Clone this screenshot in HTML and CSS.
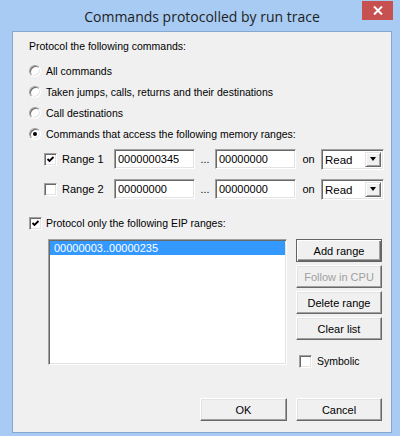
FILE: index.html
```html
<!DOCTYPE html>
<html lang="en">
<head>
  <meta charset="UTF-8">
  <meta name="viewport" content="width=device-width, initial-scale=1.0">
  <title>Commands protocolled by run trace</title>
  <link rel="stylesheet" href="styles.css">
</head>
<body>
  <div class="window">
    <div class="titlebar">
      <span class="title">Commands protocolled by run trace</span>
      <span class="close">
        <svg width="10" height="9" viewBox="0 0 10 9"><path d="M1 0.5 L9 8.5 M9 0.5 L1 8.5" stroke="#fff" stroke-width="2"/></svg>
      </span>
    </div>

    <div class="client">
      <p class="caption">Protocol the following commands:</p>

      <div class="options">
        <div class="opt"><span class="radio"></span>All commands</div>
        <div class="opt"><span class="radio"></span>Taken jumps, calls, returns and their destinations</div>
        <div class="opt"><span class="radio"></span>Call destinations</div>
        <div class="opt"><span class="radio checked"></span>Commands that access the following memory ranges:</div>
      </div>

      <div class="ranges">
        <div class="range-row">
          <span class="check checked"></span>
          <span class="range-label">Range 1</span>
          <span class="edit">0000000345</span>
          <span class="dots">...</span>
          <span class="edit">00000000</span>
          <span class="on">on</span>
          <span class="combo"><span class="combo-text">Read</span><span class="combo-btn"></span></span>
        </div>
        <div class="range-row">
          <span class="check"></span>
          <span class="range-label">Range 2</span>
          <span class="edit">00000000</span>
          <span class="dots">...</span>
          <span class="edit">00000000</span>
          <span class="on">on</span>
          <span class="combo"><span class="combo-text">Read</span><span class="combo-btn"></span></span>
        </div>
      </div>

      <div class="eip"><span class="check checked"></span>Protocol only the following EIP ranges:</div>

      <div class="eip-body">
        <div class="listbox">
          <div class="list-item selected">00000003..00000235</div>
        </div>
        <div class="side">
          <button class="btn default">Add range</button>
          <button class="btn" disabled>Follow in CPU</button>
          <button class="btn">Delete range</button>
          <button class="btn">Clear list</button>
          <div class="symbolic"><span class="check"></span>Symbolic</div>
        </div>
      </div>

      <div class="footer">
        <button class="btn ok">OK</button>
        <button class="btn">Cancel</button>
      </div>
    </div>
  </div>
</body>
</html>
```

FILE: styles.css
```css
body {
  margin: 0;
  font-family: "Liberation Sans", Arial, sans-serif;
  font-size: 10.5px;
  color: #000;
}
.window {
  width: 400px;
  height: 436px;
  background-color: #a7cbf2;
  display: flex;
  flex-direction: column;
}
.titlebar {
  position: relative;
  height: 31px;
  display: flex;
  align-items: center;
  justify-content: center;
}
.title {
  font-family: "Open Sans", "Noto Sans", sans-serif;
  font-size: 14px;
  color: #1e1e1e;
  margin-left: 4px;
  margin-top: 1px;
}
.close {
  position: absolute;
  top: 1px;
  right: 7px;
  width: 31px;
  height: 19px;
  background-color: #c75050;
  display: flex;
  align-items: center;
  justify-content: center;
}
.client {
  margin: 0 8px 3px 12px;
  height: 402px;
  box-sizing: border-box;
  border: 1px solid #86a8cf;
  background-color: #f0f0f0;
  padding-top: 7px;
}
.caption {
  margin: 0 0 0 16px;
  line-height: 14px;
}
.options {
  margin-top: 7px;
}
.opt {
  height: 21px;
  display: flex;
  align-items: center;
  padding-left: 16px;
}
.radio {
  width: 10px;
  height: 10px;
  border-radius: 50%;
  background-color: #fff;
  border: 1px solid;
  border-color: #a0a0a0 #fff #fff #a0a0a0;
  box-shadow: inset 1px 1px 0 #696969, inset -1px -1px 0 #e3e3e3;
  margin-right: 5px;
  display: flex;
  align-items: center;
  justify-content: center;
}
.radio.checked::after {
  content: "";
  width: 4px;
  height: 4px;
  border-radius: 50%;
  background-color: #000;
}
.check {
  width: 11px;
  height: 11px;
  background-color: #fff;
  border: 1px solid;
  border-color: #a0a0a0 #fff #fff #a0a0a0;
  box-shadow: inset 1px 1px 0 #696969, inset -1px -1px 0 #e3e3e3;
  flex: none;
}
.check.checked {
  background-image: url("data:image/svg+xml,%3Csvg xmlns='http://www.w3.org/2000/svg' width='11' height='11'%3E%3Cpath d='M2.5 5 L4.5 7 L8.5 3' stroke='%23000' stroke-width='1.8' fill='none'/%3E%3C/svg%3E");
}
.ranges {
  margin-top: 5px;
  display: flex;
  flex-direction: column;
  gap: 10px;
}
.range-row {
  display: flex;
  align-items: center;
  height: 20px;
  padding-left: 31px;
}
.range-label {
  width: 52px;
  margin-left: 5px;
  font-size: 11px;
}
.edit {
  width: 81px;
  height: 20px;
  box-sizing: border-box;
  background-color: #fff;
  border: 1px solid;
  border-color: #a0a0a0 #fff #fff #a0a0a0;
  box-shadow: inset 1px 1px 0 #696969, inset -1px -1px 0 #e3e3e3;
  padding: 3px 0 0 3px;
  font-size: 11px;
  line-height: 13px;
}
.dots {
  width: 20px;
  text-align: center;
}
.on {
  width: 25px;
  text-align: center;
  font-size: 11px;
}
.combo {
  width: 63px;
  height: 21px;
  box-sizing: border-box;
  background-color: #fff;
  border: 1px solid;
  border-color: #a0a0a0 #fff #fff #a0a0a0;
  box-shadow: inset 1px 1px 0 #696969, inset -1px -1px 0 #e3e3e3;
  display: flex;
  padding: 2px;
}
.combo-text {
  flex: 1;
  padding-left: 1px;
  font-size: 11.5px;
  line-height: 16px;
}
.combo-btn {
  width: 16px;
  box-sizing: border-box;
  background-color: #f0f0f0;
  border: 1px solid;
  border-color: #e3e3e3 #696969 #696969 #e3e3e3;
  box-shadow: inset 1px 1px 0 #fff, inset -1px -1px 0 #a0a0a0;
  display: flex;
  align-items: center;
  justify-content: center;
}
.combo-btn::after {
  content: "";
  border-left: 3.5px solid transparent;
  border-right: 3.5px solid transparent;
  border-top: 4px solid #000;
}
.eip {
  margin-top: 17px;
  height: 14px;
  display: flex;
  align-items: center;
  gap: 4px;
  padding-left: 16px;
}
.eip-body {
  margin-top: 9px;
  display: flex;
  align-items: flex-start;
  gap: 9px;
  padding-left: 35px;
}
.listbox {
  width: 239px;
  height: 126px;
  box-sizing: border-box;
  background-color: #fff;
  border: 1px solid;
  border-color: #a0a0a0 #fff #fff #a0a0a0;
  box-shadow: inset 1px 1px 0 #696969, inset -1px -1px 0 #e3e3e3;
  padding: 1px 1px 0 1px;
}
.list-item {
  height: 14px;
  line-height: 14px;
  padding-left: 4px;
  font-size: 11px;
}
.list-item.selected {
  background-color: #3399ff;
  color: #fff;
}
.side {
  width: 86px;
  display: flex;
  flex-direction: column;
  gap: 3px;
}
.btn {
  height: 23px;
  box-sizing: border-box;
  font-family: inherit;
  font-size: 11px;
  color: #000;
  background-color: #f0f0f0;
  border: 1px solid;
  border-color: #fff #696969 #696969 #fff;
  box-shadow: inset -1px -1px 0 #a0a0a0, inset 1px 1px 0 #e3e3e3;
  padding: 0;
}
.btn.default {
  border: 1px solid #646464;
  box-shadow: inset 1px 1px 0 #fff, inset -1px -1px 0 #696969, inset -2px -2px 0 #a0a0a0;
}
.btn:disabled {
  color: #a0a0a0;
}
.symbolic {
  margin-top: 11px;
  height: 14px;
  display: flex;
  align-items: center;
  gap: 5px;
  padding-left: 3px;
}
.footer {
  margin-top: 30px;
  display: flex;
  justify-content: flex-end;
  gap: 9px;
  padding-right: 9px;
}
.footer .btn {
  width: 86px;
}
.footer .ok {
  width: 87px;
}
```
